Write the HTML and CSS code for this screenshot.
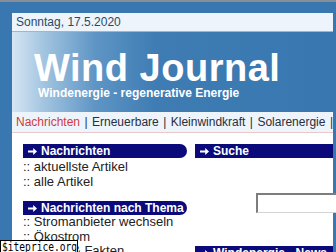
FILE: index.html
```html
<!DOCTYPE html>
<html>
<head>
<meta charset="utf-8">
<link rel="stylesheet" href="styles.css">
</head>
<body>
<div class="topline"></div>
<div class="page">
  <div class="datebar">Sonntag, 17.5.2020</div>
  <div class="header">
    <div class="title">Wind Journal</div>
    <div class="subtitle">Windenergie - regenerative Energie</div>
  </div>
  <div class="nav"><span class="active">Nachrichten</span> | Erneuerbare | Kleinwindkraft | Solarenergie | Windenergie</div>
  <div class="content">
    <div class="leftcol">
      <div class="boxhead round"><svg class="arrow" viewBox="0 0 9 7" width="9" height="7"><path d="M0 2.6H5.2V0L9 3.5 5.2 7V4.4H0Z" fill="#fff"/></svg>Nachrichten</div>
      <div class="links">
        <div class="link">:: aktuellste Artikel</div>
        <div class="link">:: alle Artikel</div>
      </div>
      <div class="boxhead round gap"><svg class="arrow" viewBox="0 0 9 7" width="9" height="7"><path d="M0 2.6H5.2V0L9 3.5 5.2 7V4.4H0Z" fill="#fff"/></svg>Nachrichten nach Thema</div>
      <div class="links tight">
        <div class="link">:: Stromanbieter wechseln</div>
        <div class="link">:: Ökostrom</div>
        <div class="link">:: Daten &amp; Fakten</div>
      </div>
    </div>
    <div class="rightcol">
      <div class="boxhead"><svg class="arrow" viewBox="0 0 9 7" width="9" height="7"><path d="M0 2.6H5.2V0L9 3.5 5.2 7V4.4H0Z" fill="#fff"/></svg>Suche</div>
      <div class="search"><input class="searchinput" type="text"></div>
      <div class="boxhead news"><svg class="arrow" viewBox="0 0 9 7" width="9" height="7"><path d="M0 2.6H5.2V0L9 3.5 5.2 7V4.4H0Z" fill="#fff"/></svg>Windenergie - News</div>
    </div>
  </div>
</div>
<div class="watermark"><span class="wmtext">$iteprice.org</span></div>
</body>
</html>
```
FILE: styles.css
```css
html, body {
  margin: 0;
  padding: 0;
}
body {
  background: #3877b0;
  width: 336px;
  height: 252px;
  overflow: hidden;
  font-family: "Liberation Sans", Arial, sans-serif;
  position: relative;
}
.topline {
  height: 2px;
  background: #8a8f96;
}
.page {
  margin: 11px 3px 0 12px;
}
.datebar {
  height: 18px;
  background: #edf4fb;
  color: #2b4a68;
  font-size: 12px;
  line-height: 19px;
  padding-left: 4px;
  border-bottom: 1px solid #a9b4bf;
  white-space: nowrap;
}
.header {
  height: 80px;
  background: linear-gradient(90deg, #d6e6f4 0%, #a2c4e0 10%, #5e95c5 26%, #3e7cb3 45%, #3877b0 100%);
  box-sizing: border-box;
  padding: 17px 0 0 22px;
  color: #fff;
}
.title {
  font-weight: bold;
  font-size: 38px;
  line-height: 38px;
  letter-spacing: 0.5px;
  white-space: nowrap;
}
.subtitle {
  font-weight: bold;
  font-size: 12px;
  line-height: 14px;
  margin-top: -1px;
  padding-left: 4px;
  white-space: nowrap;
}
.nav {
  height: 20px;
  background: #edf4fb;
  border-bottom: 1px solid #e9c9c9;
  font-size: 12px;
  line-height: 21px;
  padding-left: 4px;
  word-spacing: 1.1px;
  color: #2a2e3a;
  white-space: nowrap;
  overflow: hidden;
}
.nav .active {
  color: #d23a3a;
}
.content {
  background: #fff;
  height: 200px;
  display: flex;
  padding: 11px 0 0 11px;
  gap: 8px;
}
.leftcol {
  width: 164px;
  flex: none;
}
.rightcol {
  flex: 1;
  min-width: 0;
}
.boxhead {
  background: #0a0a7a;
  color: #fff;
  font-weight: bold;
  font-size: 12px;
  line-height: 14px;
  height: 14px;
  padding-left: 5px;
  white-space: nowrap;
  overflow: hidden;
}
.arrow {
  display: inline-block;
  vertical-align: 0px;
  margin-right: 4px;
}
.boxhead.round {
  border-radius: 0 7px 7px 0;
}
.boxhead.gap {
  margin-top: 12px;
}
.links {
  padding-top: 1px;
}
.links.tight {
  padding-top: 0;
}
.links.tight .link {
  line-height: 14.5px;
}
.link {
  font-size: 13px;
  line-height: 15px;
  color: #222;
  white-space: nowrap;
}
.search {
  height: 55px;
  display: flex;
  align-items: flex-end;
  justify-content: flex-end;
}
.searchinput {
  width: 81px;
  height: 20px;
  box-sizing: border-box;
  margin: 0 -4px 0 0;
  border-top: 2px solid #7d7d7d;
  border-left: 2px solid #7d7d7d;
  border-bottom: 1px solid #d4d4d4;
  border-right: none;
  padding: 0;
  background: #fff;
}
.boxhead.news {
  margin-top: 33px;
}
.watermark {
  position: absolute;
  left: 0;
  top: 240px;
  width: 75px;
  height: 14px;
  background: #fff;
  border: 1px solid #000;
  overflow: hidden;
  padding-left: 1px;
}
.wmtext {
  display: block;
  font-family: "DejaVu Sans Mono", monospace;
  font-size: 12px;
  line-height: 13px;
  color: #000;
  white-space: nowrap;
  transform: scaleX(0.8);
  transform-origin: left center;
}
```
